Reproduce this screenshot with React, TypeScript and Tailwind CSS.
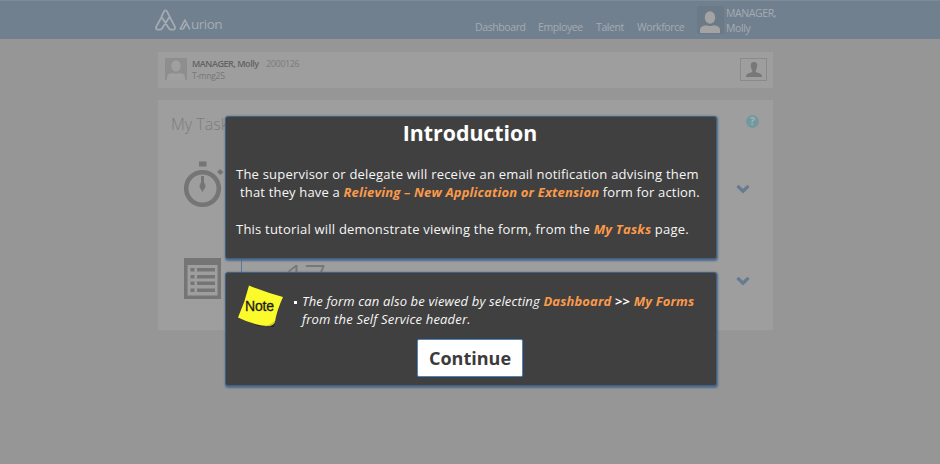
import type { ReactNode } from "react";

const NAV = [
  { label: "Dashboard", width: "w-[63px]" },
  { label: "Employee", width: "w-[58px]" },
  { label: "Talent", width: "w-[41px]" },
  { label: "Workforce", width: "w-[60px]" },
];

function Person({ className }: { className: string }) {
  return (
    <svg viewBox="0 0 20 22" className={className} fill="currentColor">
      <ellipse cx="10" cy="6.5" rx="5.2" ry="6.2" />
      <path d="M0 22v-3.5Q0 15 6.5 14.2Q10 16 13.5 14.2Q20 15 20 18.5V22z" />
    </svg>
  );
}

function Bust({ className }: { className: string }) {
  return (
    <svg viewBox="0 0 16 15" className={className} fill="currentColor">
      <path d="M8 0C10.5 0 11.5 1.6 11.2 4.2C11 6.2 10.3 7.3 9.8 8.2V10L14.5 11.8Q16 12.5 16 15H0Q0 12.5 1.5 11.8L6.2 10V8.2C5.7 7.3 5 6.2 4.8 4.2C4.5 1.6 5.5 0 8 0Z" />
    </svg>
  );
}

function Header() {
  return (
    <header className="flex h-[39px] border-t border-[#7d8b99] bg-[#71808f] pl-[155px] text-[#a5abb1]">
      <svg viewBox="0 0 21 22" className="mt-[8px] h-[22px] w-[21px] shrink-0" fill="none" stroke="currentColor" strokeWidth="1.8" strokeLinejoin="round">
        <path d="M6.4 7.8L8.8 2.8Q9.5 1.4 10.5 1.4Q11.5 1.4 12.2 2.8L19.8 17.6Q20.7 20.6 18 20.6H16.2Q14.9 20.6 14 19.4L6.6 8L1.3 17.6Q0.3 20.6 3 20.6H4.8Q6.1 20.6 7 19.4L14.4 8" />
      </svg>
      <svg viewBox="0 0 12 11" className="mt-[18px] ml-[3px] h-[11px] w-[12px] shrink-0" fill="none" stroke="currentColor" strokeWidth="1.6" strokeLinejoin="round">
        <path d="M4.2 10H1.2L5.9 1L10.8 10.4M4.2 10L7 5.2" />
      </svg>
      <span className="mt-[14px] w-[30px] text-[13.5px] leading-[19px] font-medium tracking-[-0.5px]">urion</span>
      <nav className="mt-[19px] ml-[254px] flex w-[222px] shrink-0 text-[10.5px] leading-[15px] tracking-[-0.4px]">
        {NAV.map((n) => (
          <a key={n.label} className={n.width}>
            {n.label}
          </a>
        ))}
      </nav>
      <div className="mt-[5px] flex h-[28px] w-[27px] shrink-0 items-end justify-center bg-[#6c7987] pr-[1px] pb-[1px] text-[#a3a3a3]">
        <Person className="h-[22px] w-[20px]" />
      </div>
      <div className="mt-[5px] ml-[2px] text-[10.5px] leading-[14.5px] tracking-[-0.4px]">
        MANAGER,
        <br />
        Molly
      </div>
    </header>
  );
}

function Chevron() {
  return (
    <svg viewBox="0 0 14 10" className="h-[10px] w-[14px]" fill="none" stroke="#657b90" strokeWidth="3.2">
      <path d="M1.5 1.8L7 7.2L12.5 1.8" />
    </svg>
  );
}

function StopWatch() {
  return (
    <svg viewBox="0 0 40 47" className="h-[47px] w-[40px]" fill="#757575">
      <circle cx="18.5" cy="27.5" r="16.3" fill="none" stroke="#757575" strokeWidth="4.6" />
      <rect x="15" y="0.5" width="7.5" height="5" />
      <path d="M33 11l3-3 3.5 3-3 3z" />
      <path d="M17 15h3v6.5q3 3.5 0 7l-1.5 2.5-1.5-2.5q-3-3.5 0-7z" />
    </svg>
  );
}

function ListIcon() {
  return (
    <svg viewBox="0 0 38 41" className="h-[41px] w-[38px]" fill="#757575">
      <path fillRule="evenodd" d="M0 0H37V41H0zM3.5 7V37.5H33.5V7z" />
      {[10, 17, 23.5, 30.5].map((y) => (
        <g key={y}>
          <rect x="6.5" y={y} width="4" height="3.5" />
          <rect x="13" y={y} width="18" height="3.5" />
        </g>
      ))}
    </svg>
  );
}

function StickyNote() {
  return (
    <svg viewBox="0 0 50 48" className="mt-[11px] ml-[10px] h-[48px] w-[50px] shrink-0">
      <path d="M4 34Q20 41 31 43.5L39 40L37.5 43L22 42z" fill="#292922" />
      <path d="M13 1.5Q29 8 47 13Q41 26 39 37.5Q37.5 42 31 42Q17 41 2 33.5Q9 18 13 1.5z" fill="#fbfb2c" />
      <path d="M28 42Q37 43 39 37.5L39.2 36Q36 41 28 42z" fill="#c9c91f" />
      <text x="9" y="26.6" fontFamily="Liberation Sans, Arial, sans-serif" fontSize="14" stroke="#1a1a1a" strokeWidth="0.3" textLength="29" fill="#1a1a1a">
        Note
      </text>
    </svg>
  );
}

function Panel({ className, children }: { className: string; children: ReactNode }) {
  return (
    <section className={`w-[492px] rounded-[3px] border border-[#43607f] bg-[#404040] shadow-[0.5px_1px_2px_0.5px_#4f6a8c] ${className}`}>
      {children}
    </section>
  );
}

const hot = "font-bold italic text-[#fb9a4b]";

export default function App() {
  return (
    <div className="relative h-[464px] w-[940px] overflow-hidden bg-[#969696] font-['Open_Sans','Noto_Sans',sans-serif]">
      <Header />
      <main className="ml-[158px] w-[615px] pt-[13px]">
        <div className="flex h-[36px] bg-[#9e9e9e] pl-[7px]">
          <div className="mt-[6px] flex h-[22px] w-[22px] items-end justify-center bg-[#8e8e8e] text-[#a0a0a0]">
            <Person className="h-[20px] w-[18px]" />
          </div>
          <div className="mt-[6px] ml-[5px] text-[#777]">
            <div className="flex text-[9px] leading-[12px]">
              <span className="w-[74px] font-semibold tracking-[-0.45px] text-[#626262]">MANAGER, Molly</span>
              <span className="tracking-[-0.4px] text-[#7c7c7c]">2000126</span>
            </div>
            <div className="text-[8.5px] leading-[11px] tracking-[-0.3px]">T-mng25</div>
          </div>
          <div className="mt-[6px] mr-[6px] ml-auto flex h-[23px] w-[27px] items-center justify-center border border-[#8a8a8a] text-[#787878]">
            <Bust className="h-[15px] w-[16px]" />
          </div>
        </div>
        <div className="mt-[12px] h-[231px] border-b border-[#989898] bg-[#9e9e9e]">
          <div className="flex h-[45px] justify-between pt-[12px] pr-[14px] pl-[13px]">
            <h2 className="text-[16px] leading-[24px] font-light text-[#7c7c7c]">My Tasks</h2>
            <span className="mt-[3px] h-[13px] w-[13px] rounded-full bg-[#74999d] text-center text-[10px] leading-[13px] font-bold text-[#a5b2b4]">?</span>
          </div>
          <div className="flex h-[93px] justify-between pt-[16px] pr-[23px] pl-[26px]">
            <StopWatch />
            <div className="pt-[23px]">
              <Chevron />
            </div>
          </div>
          <div className="flex h-[80px] pt-[20px] pr-[23px] pl-[26px]">
            <ListIcon />
            <div className="ml-[19px] h-[42px] w-px bg-[#5a7697]" />
            <span className="mt-[-3px] ml-[42px] text-[40px] leading-[48px] font-light tracking-[-3px] text-[#777]">17</span>
            <div className="ml-auto pt-[18px]">
              <Chevron />
            </div>
          </div>
        </div>
      </main>

      <div className="absolute inset-0 pt-[116px] pl-[225px] text-[13px] leading-[18px] text-[#f6f6f6]">
        <Panel className="h-[143px]">
          <h1 className="mt-[2px] mr-[2px] text-center text-[21.3px] leading-[28px] font-bold text-white">Introduction</h1>
          <div className="mt-[18px] pl-[10px] whitespace-pre">
            <p className="tracking-[0.215px]">The supervisor or delegate will receive an email notification advising them</p>
            <p className="pl-[4px] tracking-[0.17px]">
              that they have a <span className={hot}>Relieving – New Application or Extension</span> form for action.
            </p>
            <p className="mt-[19px] tracking-[0.215px]">
              This tutorial will demonstrate viewing the form, from the <span className={hot}>My Tasks</span> page.
            </p>
          </div>
        </Panel>
        <Panel className="mt-[13px] h-[114px]">
          <div className="flex h-[66px]">
            <StickyNote />
            <div className="mt-[19px] ml-[7px] whitespace-pre italic">
              <p className="flex items-center tracking-[0.14px]">
                <span className="mt-[2px] mr-[5px] ml-[1px] h-[3px] w-[3px] bg-white" />
                <span>
                  The form can also be viewed by selecting <span className={hot}>Dashboard</span> <b className="text-white not-italic">&gt;&gt;</b> <span className={hot}>My Forms</span>
                </span>
              </p>
              <p className="pl-[9px] tracking-[0.18px]">from the Self Service header.</p>
            </div>
          </div>
          <button className="ml-[191px] block h-[38px] w-[106px] rounded-[2px] border border-[#4f85bd] bg-white text-center text-[18px] leading-[36px] font-bold text-[#3b3b3b]">
            Continue
          </button>
        </Panel>
      </div>
    </div>
  );
}
